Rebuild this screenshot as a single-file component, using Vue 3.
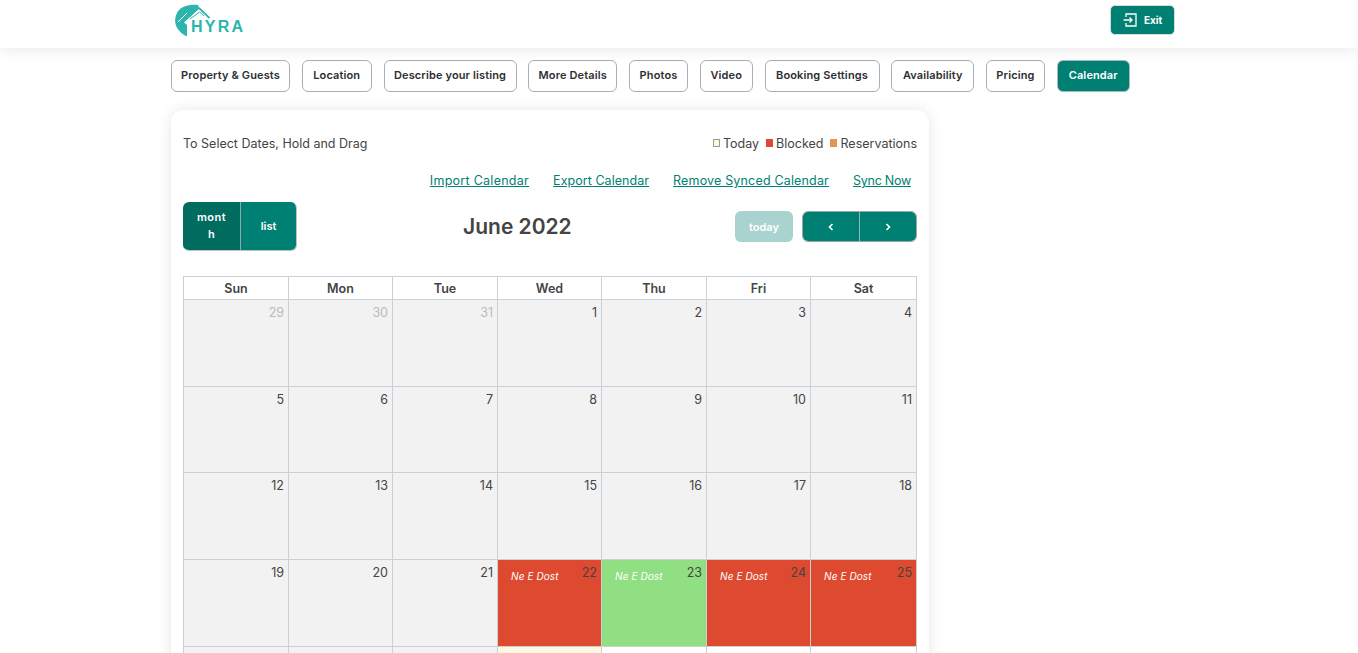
<script setup>
const tabs = ['Property & Guests','Location','Describe your listing','More Details','Photos','Video','Booking Settings','Availability','Pricing','Calendar']
const days = ['Sun','Mon','Tue','Wed','Thu','Fri','Sat']
const cells = [
  {n:29,o:1},{n:30,o:1},{n:31,o:1},{n:1},{n:2},{n:3},{n:4},
  {n:5},{n:6},{n:7},{n:8},{n:9},{n:10},{n:11},
  {n:12},{n:13},{n:14},{n:15},{n:16},{n:17},{n:18},
  {n:19},{n:20},{n:21},{n:22,c:'red',e:1},{n:23,c:'green',e:1},{n:24,c:'red',e:1},{n:25,c:'red',e:1},
  {},{},{},{c:'now'},{c:'white'},{c:'white'},{c:'white'},
]
</script>

<template>
  <div class="page">
    <header class="top">
      <div class="top-in">
        <div class="logo">
          <svg width="36" height="34" viewBox="0 0 36 34">
            <path d="M24 1 C14 -0.5 5 3 2.5 10 C-1 18 2 27 13 32.5 L13 21 L10 18.5 L25.5 4.5 Z" fill="#2bb5ac"/>
            <path d="M4 18 L13 9" stroke="#fff" stroke-width="1"/>
            <path d="M25 4 L35.5 14" fill="none" stroke="#2bb5ac" stroke-width="1.8"/>
            <path d="M16 15 L25.5 8 L30 12" fill="none" stroke="#2bb5ac" stroke-width="1"/>
          </svg>
          <span class="logo-t">HYRA</span>
        </div>
        <button class="exit">
          <svg width="14" height="14" viewBox="0 0 14 14" fill="none" stroke="#fff" stroke-width="1.3">
            <path d="M3 4 V1 H13 V13 H3 V10"/>
            <path d="M0.5 7 H9 M6.5 4.5 L9 7 L6.5 9.5"/>
          </svg>
          <span>Exit</span>
        </button>
      </div>
    </header>
    <nav class="tabs">
      <button v-for="t in tabs" :key="t" class="tab" :class="{active:t==='Calendar'}">{{ t }}</button>
    </nav>
    <section class="card">
      <div class="hint-row">
        <span>To Select Dates, Hold and Drag</span>
        <div class="legend">
          <i class="sw sw-t"></i><span>Today</span>
          <i class="sw sw-b"></i><span>Blocked</span>
          <i class="sw sw-r"></i><span>Reservations</span>
        </div>
      </div>
      <div class="links">
        <a>Import Calendar</a><a>Export Calendar</a><a>Remove Synced Calendar</a><a>Sync Now</a>
      </div>
      <div class="toolbar">
        <div class="group view">
          <button class="b b-month">month</button>
          <button class="b b-list">list</button>
        </div>
        <h2>June 2022</h2>
        <div class="right">
          <button class="today">today</button>
          <div class="group nav">
            <button class="b">
              <svg width="8" height="10" viewBox="0 0 8 10" fill="none" stroke="#fff" stroke-width="1.6"><path d="M5.5 2 L2.5 5 L5.5 8"/></svg>
            </button>
            <button class="b">
              <svg width="8" height="10" viewBox="0 0 8 10" fill="none" stroke="#fff" stroke-width="1.6"><path d="M2.5 2 L5.5 5 L2.5 8"/></svg>
            </button>
          </div>
        </div>
      </div>
      <div class="cal">
        <div v-for="d in days" :key="d" class="dow">{{ d }}</div>
        <div v-for="(c,i) in cells" :key="i" class="cell" :class="[c.c, {other:c.o}]">
          <span v-if="c.e" class="ev">Ne E Dost</span>
          <span v-if="c.n" class="num">{{ c.n }}</span>
        </div>
      </div>
    </section>
  </div>
</template>

<style>
html, body { margin: 0; height: 653px; overflow: hidden; background: #fff; }
</style>

<style scoped>
.page { height: 653px; overflow: hidden; font-family: Inter, "Noto Sans", sans-serif; color: #444; background: #fff; }
button { font-family: inherit; cursor: pointer; }
.top { height: 48px; background: #fff; box-shadow: 0 2px 14px rgba(0,0,0,.09); position: relative; }
.top-in { width: 1004px; margin-left: 171px; display: flex; justify-content: space-between; align-items: flex-start; }
.logo { display: flex; align-items: flex-end; height: 36px; margin: 2px 0 0 3px; }
.logo-t { font: 700 16px/1 "Liberation Sans", sans-serif; letter-spacing: 2.2px; color: #2bb5ac; margin-left: -19px; padding-bottom: 3px; }
.exit { margin-top: 5px; width: 65px; height: 30px; display: flex; align-items: center; justify-content: center; gap: 7px; background: #008072; color: #fff; border: 1px solid #d6dfde; border-radius: 5px; font-size: 10px; font-weight: 700; padding: 0; }
.tabs { display: grid; grid-template-columns: 119px 70px 133px 89px 59px 53px 115px 83px 59px 73px; gap: 11.75px; margin: 12px 0 0 171px; }
.tab { height: 32px; padding: 0 0 2px; background: #fff; border: 1px solid #a9aeb6; border-radius: 6px; font-size: 11px; font-weight: 600; letter-spacing: .13px; color: #2d2f33; white-space: nowrap; }
.tab.active { background: #008072; color: #fff; border-color: #a9b8b8; }
.card { width: 758px; margin: 18px 0 0 171px; box-sizing: border-box; padding: 0 12px 30px; background: #fff; border-radius: 12px; box-shadow: 0 0 14px rgba(0,0,0,.1); }
.hint-row { display: flex; justify-content: space-between; align-items: center; padding-top: 24px; height: 18px; font-size: 12.5px; color: #444; }
.legend { display: flex; align-items: center; }
.sw { width: 7px; height: 8px; margin: 0 3.5px 0 6.5px; display: block; box-sizing: border-box; }
.sw-t { background: #fff6dc; border: 1px solid #999; }
.sw-b { background: #de4a2f; }
.sw-r { background: #e29650; }
.links { display: flex; justify-content: flex-end; gap: 24px; margin-top: 20px; padding-right: 6px; height: 18px; font-size: 12.5px; line-height: 18px; letter-spacing: .12px; }
.links a { color: #008072; text-decoration: underline; }
.links a:nth-child(1) { letter-spacing: .27px; }
.links a:nth-child(2) { letter-spacing: .05px; }
.links a:nth-child(3) { letter-spacing: .17px; }
.links a:nth-child(4) { letter-spacing: -.25px; }
.toolbar { display: flex; align-items: center; justify-content: space-between; margin-top: 12px; height: 49px; position: relative; }
.toolbar h2 { margin: 0 0 1px; position: absolute; left: 280px; font-size: 21px; font-weight: 600; color: #444; }
.group { display: flex; border-radius: 6px; overflow: hidden; }
.b { background: #008072; border: 0; color: #fff; font-size: 11px; font-weight: 600; padding: 0; }
.view { height: 49px; width: 114px; border: 1px solid #b5c6c4; border-width: 0 1px 1px 0; box-sizing: border-box; }
.b-month { width: 58px; background: #006b5f; line-height: 17px; padding: 0 12px; letter-spacing: .5px; word-break: break-all; border-right: 1px solid #8fa9a6; }
.b-list { flex: 1; }
.right { display: flex; align-items: center; gap: 9px; }
.today { width: 58px; height: 31px; background: #a8d3cf; color: #fff; border: 0; border-radius: 6px; font-size: 11px; font-weight: 600; padding: 0; }
.nav { height: 31px; width: 115px; border: 1px solid #9aa9a8; box-sizing: border-box; }
.nav .b { flex: 1; display: flex; align-items: center; justify-content: center; }
.nav .b:first-child { border-right: 1px solid #8db8b3; }
.cal { display: grid; grid-template-columns: 105px 104px 105px 104px 105px 104px 106px; grid-auto-rows: 86.7px; grid-template-rows: 23px; width: 734px; margin: 25px 0 0; box-sizing: border-box; border-left: 1px solid #ccd0d6; border-top: 1px solid #ccd0d6; }
.dow { display: flex; align-items: center; justify-content: center; font-size: 12.5px; font-weight: 600; color: #444; border-right: 1px solid #ccd0d6; border-bottom: 1px solid #ccd0d6; background: #fff; }
.cell { position: relative; background: #f2f2f2; border-right: 1px solid #ccd0d6; border-bottom: 1px solid #ccd0d6; box-sizing: border-box; }
.num { position: absolute; top: 4px; right: 4px; font-size: 12.5px; line-height: 17px; color: #444; }
.other .num { color: #bbb; }
.cell.red { background: #de4a2f; }
.cell.green { background: #90df83; }
.cell.now { background: #fff8df; }
.cell.white { background: #fff; }
.ev { position: absolute; left: 13px; top: 9px; font-size: 10px; line-height: 14px; font-style: italic; letter-spacing: .1px; color: #fff; }
</style>
